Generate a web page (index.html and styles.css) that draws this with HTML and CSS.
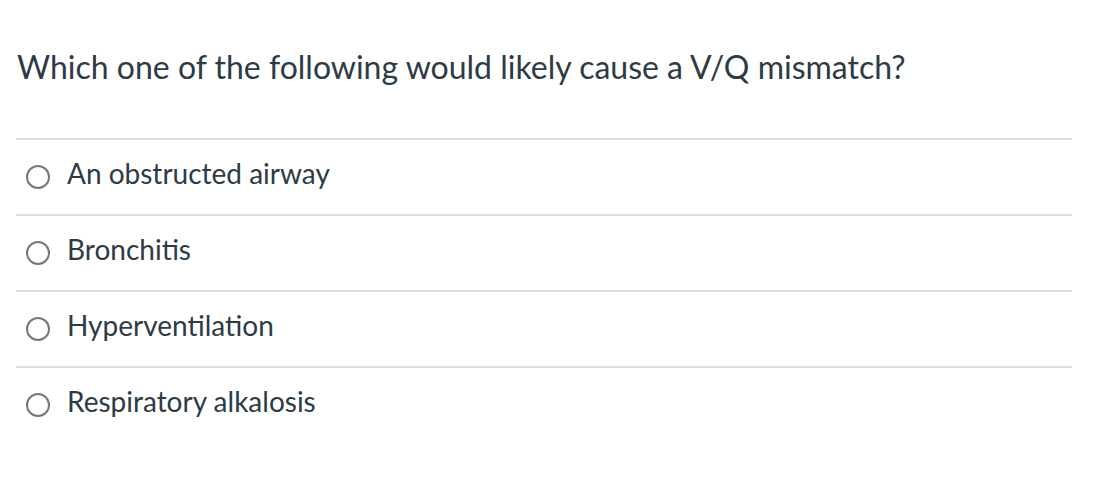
FILE: index.html
```html
<!DOCTYPE html>
<html>
<head>
<meta charset="utf-8">
<link rel="stylesheet" href="styles.css">
</head>
<body>
<div class="quiz">
  <div class="question">Which one of the following would likely cause a V/Q mismatch?</div>
  <div class="answers">
    <label class="answer"><span class="radio"></span><span class="text">An obstructed airway</span></label>
    <label class="answer"><span class="radio"></span><span class="text">Bronchitis</span></label>
    <label class="answer"><span class="radio"></span><span class="text">Hyperventilation</span></label>
    <label class="answer"><span class="radio"></span><span class="text">Respiratory alkalosis</span></label>
  </div>
</div>
</body>
</html>
```
FILE: styles.css
```css
html, body {
  margin: 0;
  padding: 0;
  background: #ffffff;
}
body {
  font-family: Lato, "Liberation Sans", sans-serif;
  color: #2d3b45;
}
.quiz {
  width: 1056px;
  padding: 0 0 0 16px;
}
.question {
  font-size: 32px;
  line-height: 40px;
  padding: 47px 0 0 1px;
  box-sizing: border-box;
  height: 138px;
}
.answers {
  display: flex;
  flex-direction: column;
}
.answer {
  display: flex;
  align-items: center;
  gap: 17px;
  height: 74px;
  border-top: 2px solid #dddddd;
  padding-left: 10px;
  font-size: 28px;
}
.answer .text {
  position: relative;
  top: -4px;
}
.radio {
  width: 24px;
  height: 24px;
  border: 2px solid #777777;
  border-radius: 50%;
  box-sizing: border-box;
  display: inline-block;
}
```
